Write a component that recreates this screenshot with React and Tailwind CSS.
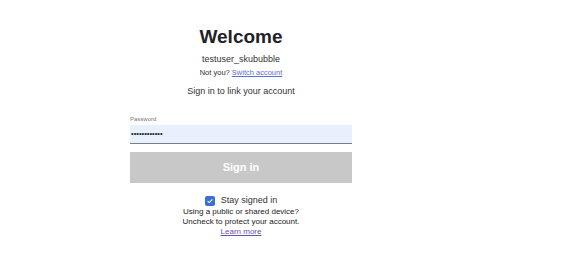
export default function App() {
  return (
    <div
      className="w-[563px] h-[254px] bg-white"
      style={{ fontFamily: '"Liberation Sans", Arial, sans-serif' }}
    >
      <div className="ml-[130px] w-[222px] pt-[26px] flex flex-col items-center text-[#202124]">
        <h1 className="text-[19px] leading-[22px] font-bold text-[#1f2328]">Welcome</h1>
        <div className="mt-[6px] text-[9px] leading-[11px] text-[#333]">testuser_skububble</div>
        <div className="mt-[3px] text-[7.5px] leading-[10px] text-[#333]">
          Not you?{" "}
          <a href="#" className="text-[#5a6fd8] underline">
            Switch account
          </a>
        </div>
        <div className="mt-[8px] text-[9px] leading-[11px] text-[#333]">Sign in to link your account</div>

        <div className="mt-[18px] w-full">
          <label className="block text-[6px] leading-[8px] text-[#777]">Password</label>
          <div className="mt-[2px] h-[19px] bg-[#e8f0fe] border-b border-[#7a7f87] flex items-center px-[1px]">
            <span className="text-[7.5px] leading-none text-[#222]">••••••••••••</span>
          </div>
        </div>

        <button className="mt-[8px] w-full h-[31px] bg-[#c8c8c8] text-white text-[11px] font-bold">
          Sign in
        </button>

        <label className="mt-[12px] flex items-center gap-[6px] text-[9px] leading-[11px] text-[#333]">
          <span className="w-[10px] h-[10px] rounded-[2px] bg-[#3b6fd8] flex items-center justify-center">
            <svg viewBox="0 0 10 10" className="w-[8px] h-[8px]">
              <path d="M2 5.2 L4 7 L8 3" fill="none" stroke="white" strokeWidth="1.4" />
            </svg>
          </span>
          Stay signed in
        </label>
        <div className="mt-[1px] text-[8px] leading-[10px] text-center text-[#222]">
          Using a public or shared device?
          <br />
          Uncheck to protect your account.
          <br />
          <a href="#" className="text-[#6a4fb0] underline">
            Learn more
          </a>
        </div>
      </div>
    </div>
  );
}
